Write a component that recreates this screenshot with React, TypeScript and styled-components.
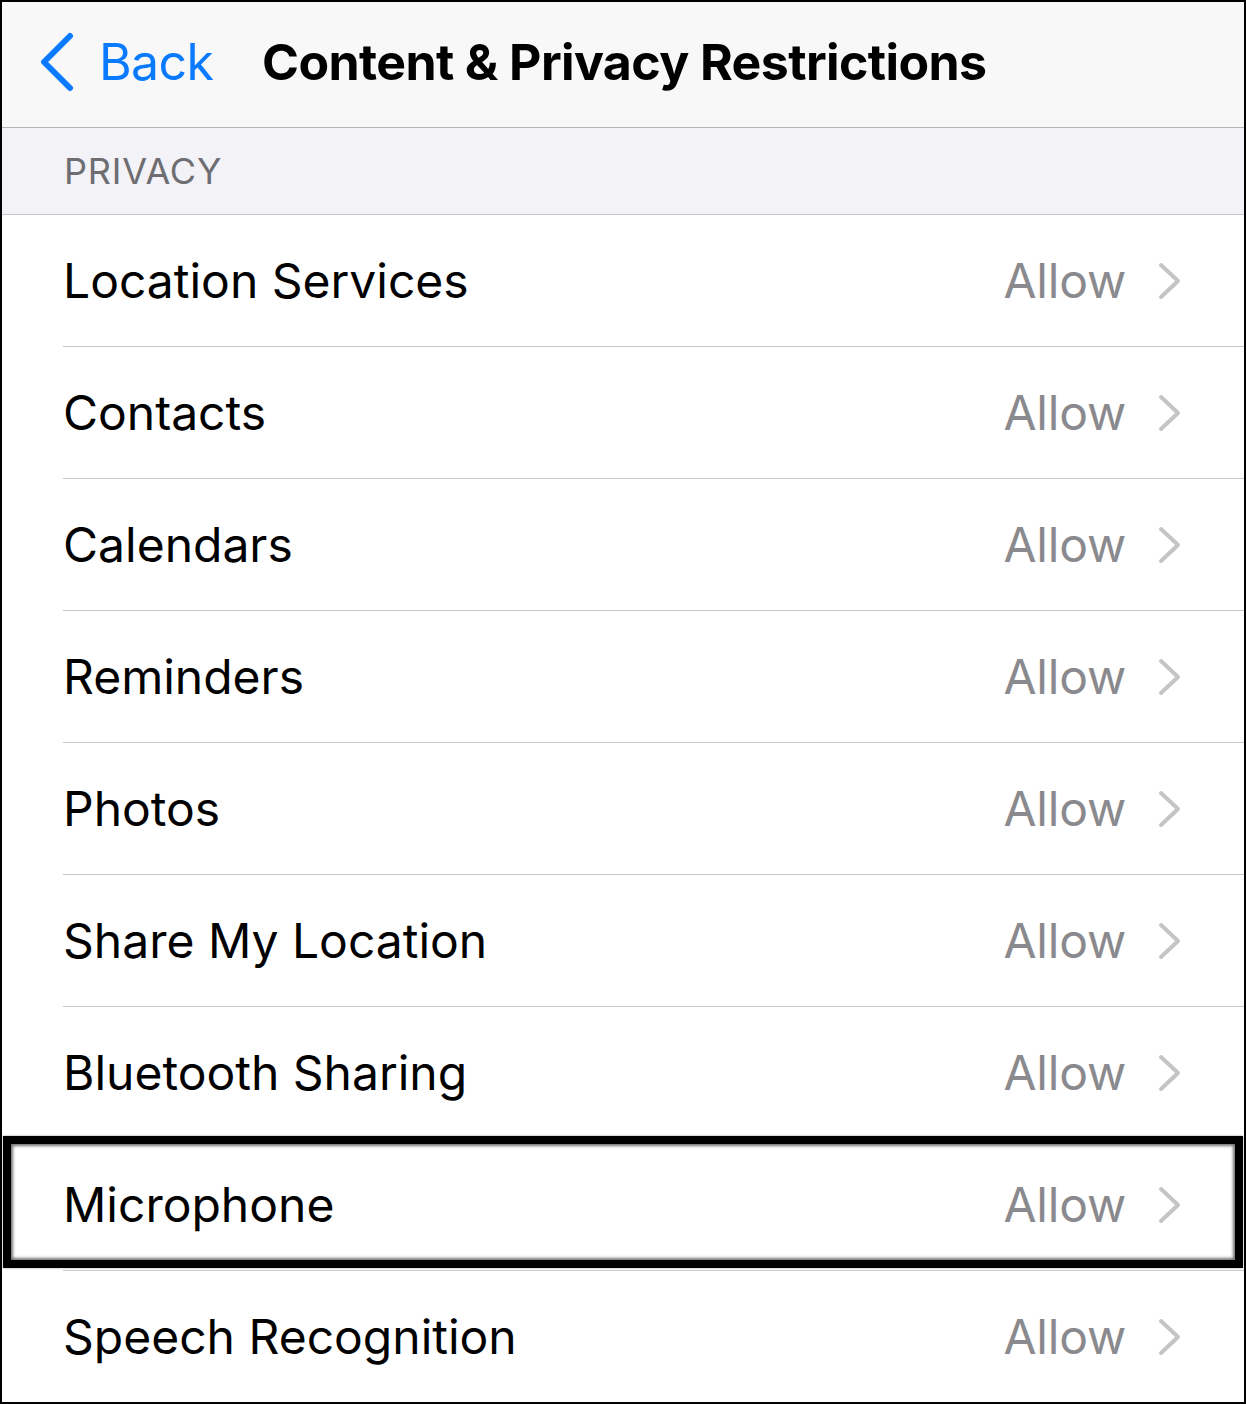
import React from "react";
import styled, { createGlobalStyle } from "styled-components";

const GlobalStyle = createGlobalStyle`
  html, body {
    margin: 0;
    padding: 0;
    background: #ffffff;
  }
  body {
    font-family: Inter, "Noto Sans", "Liberation Sans", sans-serif;
    -webkit-font-smoothing: antialiased;
  }
`;

const ITEMS = [
  "Location Services",
  "Contacts",
  "Calendars",
  "Reminders",
  "Photos",
  "Share My Location",
  "Bluetooth Sharing",
  "Microphone",
  "Speech Recognition",
];

function BackChevron() {
  return (
    <svg width="38" height="60" viewBox="0 0 38 60">
      <path
        d="M32 4 L6 30 L32 56"
        fill="none"
        stroke="#0a7aff"
        strokeWidth="6"
        strokeLinecap="round"
        strokeLinejoin="round"
      />
    </svg>
  );
}

function RowChevron() {
  return (
    <svg width="24" height="38" viewBox="0 0 24 38">
      <path
        d="M3 3 L20 19 L3 35"
        fill="none"
        stroke="#c4c4c7"
        strokeWidth="4"
        strokeLinecap="round"
        strokeLinejoin="round"
      />
    </svg>
  );
}

function App() {
  return (
    <>
      <GlobalStyle />
      <Frame>
        <NavBar>
          <BackButton>
            <BackChevron />
            <BackLabel>Back</BackLabel>
          </BackButton>
          <Title>Content &amp; Privacy Restrictions</Title>
        </NavBar>
        <SectionHeader>PRIVACY</SectionHeader>
        <List>
          {ITEMS.map((name) => (
            <Row key={name}>
              <RowInner>
                <Label>{name}</Label>
                <Value>Allow</Value>
                <ChevronWrap>
                  <RowChevron />
                </ChevronWrap>
              </RowInner>
              {name === "Microphone" && <Highlight />}
            </Row>
          ))}
        </List>
      </Frame>
    </>
  );
}

const Frame = styled.div`
  width: 1246px;
  height: 1404px;
  box-sizing: border-box;
  border: 2px solid #000;
  overflow: hidden;
  background: #fff;
  display: flex;
  flex-direction: column;
`;

const NavBar = styled.div`
  height: 126px;
  flex-shrink: 0;
  box-sizing: border-box;
  display: flex;
  align-items: center;
  padding: 0 0 6px 36px;
  background: #f8f8f8;
  border-bottom: 1px solid #b4b4b4;
`;

const BackButton = styled.div`
  display: flex;
  align-items: center;
  gap: 23px;
  width: 224px;
`;

const BackLabel = styled.span`
  font-size: 50px;
  color: #0a7aff;
  letter-spacing: -0.6px;
`;

const Title = styled.h1`
  margin: 0;
  font-size: 50px;
  font-weight: 700;
  color: #000;
  letter-spacing: -0.6px;
`;

const SectionHeader = styled.div`
  height: 87px;
  flex-shrink: 0;
  box-sizing: border-box;
  display: flex;
  align-items: center;
  padding-left: 62px;
  background: #f2f2f7;
  border-bottom: 1px solid #c8c7cc;
  font-size: 36px;
  color: #6d6d72;
  letter-spacing: 0.8px;
`;

const List = styled.div`
  display: flex;
  flex-direction: column;
`;

const Row = styled.div`
  position: relative;
  padding-left: 61px;
`;

const RowInner = styled.div`
  height: 131px;
  display: flex;
  align-items: center;
  border-bottom: 1px solid #c8c7cc;
  padding-right: 62px;
`;

const Label = styled.span`
  flex: 1;
  font-size: 48px;
  color: #000;
  letter-spacing: 0;
`;

const Value = styled.span`
  font-size: 48px;
  color: #8a8a8e;
  letter-spacing: -0.2px;
`;

const ChevronWrap = styled.span`
  display: flex;
  margin-left: 32px;
`;

const Highlight = styled.div`
  position: absolute;
  top: -3px;
  left: 1px;
  right: 1px;
  bottom: 3px;
  border: 8px solid #000;
  box-shadow: inset 0 0 3px 2px rgba(0, 0, 0, 0.55), 0 0 2px rgba(0, 0, 0, 0.4);
  pointer-events: none;
`;

export default App;
